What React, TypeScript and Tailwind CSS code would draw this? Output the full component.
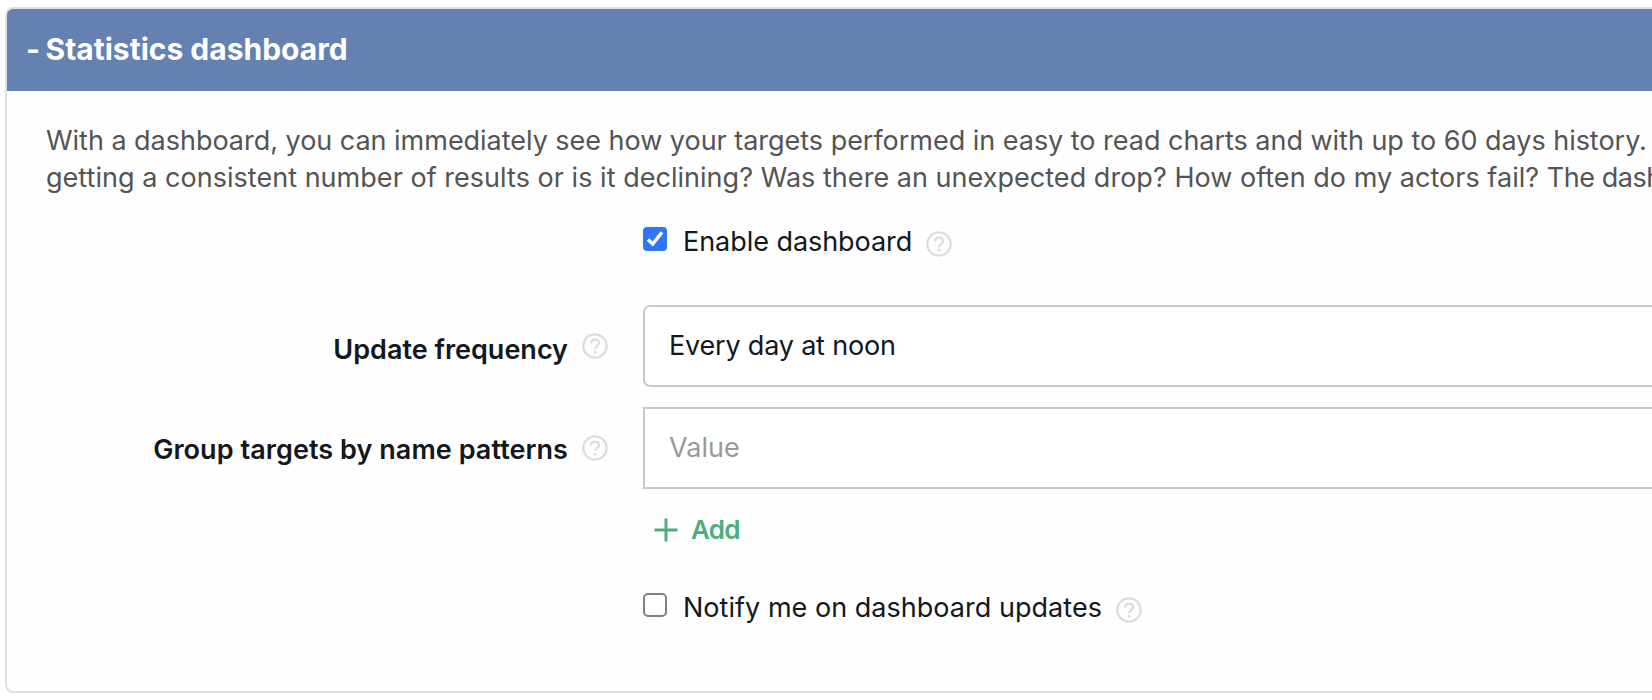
import { useState } from "react";

function HelpIcon({ className = "" }: { className?: string }) {
  return (
    <svg viewBox="0 0 26 26" fill="none" stroke="#dcdcdc" className={`size-[26px] shrink-0 ${className}`}>
      <circle cx="13" cy="13" r="11.7" strokeWidth="2.2" />
      <path d="M9.1 10.4c0-2.3 1.6-3.8 3.9-3.8s4 1.4 4 3.5c0 3-3.9 3-3.9 6" strokeWidth="2.3" />
      <circle cx="13.1" cy="19.2" r="1.5" fill="#dcdcdc" stroke="none" />
    </svg>
  );
}

function Checkbox({ checked, onChange }: { checked: boolean; onChange: () => void }) {
  return (
    <button
      type="button"
      role="checkbox"
      aria-checked={checked}
      onClick={onChange}
      className={
        checked
          ? "size-6 shrink-0 rounded-[4px] bg-[#2f76f6]"
          : "size-6 shrink-0 rounded-[5px] border-2 border-[#808080] bg-white"
      }
    >
      {checked && (
        <svg viewBox="0 0 24 24" fill="none" stroke="#fff" strokeWidth="3.4" className="size-6">
          <path d="M4.9 12.6 9.7 17 19 5.2" />
        </svg>
      )}
    </button>
  );
}

export default function App() {
  const [enabled, setEnabled] = useState(true);
  const [notify, setNotify] = useState(false);

  return (
    <div className="h-[700px] w-full overflow-hidden bg-white pl-[5px] pt-[7px] font-['Inter',sans-serif] text-[27px] text-[#12181c]">
      <section className="h-[686px] w-[1660px] overflow-hidden rounded-[8px] border-2 border-[#e0e0e0] bg-[#fefefe]">
        <header className="flex h-[82px] items-center bg-[#6581b1] pb-[2px] pl-[19px]">
          <h2 className="text-[30px] leading-[36px] font-bold tracking-[0px] whitespace-pre text-white">
            <span className="tracking-[-0.8px]">- </span>Statistics dashboard
          </h2>
        </header>

        <div className="mt-[31px] ml-[39px] text-[#545454]">
          <p className="leading-[37px] tracking-[-0.025px] whitespace-nowrap">
            With a dashboard, you can immediately see how your targets performed in easy to read charts and with up to 60 days history.
          </p>
          <p className="leading-[37px] tracking-[0.03px] whitespace-nowrap">
            getting a consistent number of results or is it declining? Was there an unexpected drop? How often do my actors fail? <span className="tracking-[-0.45px]">The dash</span>
          </p>
        </div>

        <div className="mt-[31px] ml-[636px] flex h-[28px] items-start">
          <Checkbox checked={enabled} onChange={() => setEnabled(!enabled)} />
          <span className="ml-[16px] w-[227px] leading-[30px] tracking-[-0.05px] whitespace-nowrap">Enable dashboard</span>
          <HelpIcon className="mt-[4px] ml-[16px]" />
        </div>

        <div className="mt-[50px] flex h-[82px]">
          <div className="flex w-[636px] items-start justify-end pr-[35px]">
            <span className="mt-[30px] leading-[30px] font-semibold whitespace-nowrap">Update frequency</span>
            <HelpIcon className="mt-[28px] ml-[14px]" />
          </div>
          <div className="flex h-[82px] grow items-center rounded-[7px] border-2 border-[#c9c9c9] bg-white pl-[24px]">
            <span className="leading-[30px] tracking-[-0.19px]">Every day at noon</span>
          </div>
        </div>

        <div className="mt-[20px] flex h-[82px]">
          <div className="flex w-[636px] items-start justify-end pr-[35px]">
            <span className="mt-[28px] leading-[30px] font-semibold tracking-[0.06px] whitespace-nowrap">Group targets by name patterns</span>
            <HelpIcon className="mt-[28px] ml-[14px]" />
          </div>
          <div className="flex h-[82px] grow items-center border-2 border-[#c9c9c9] bg-white pl-[24px]">
            <span className="leading-[30px] text-[#999999]">Value</span>
          </div>
        </div>

        <button type="button" className="mt-[26px] ml-[647px] flex h-[30px] items-center text-[#4bae7c]">
          <svg viewBox="0 0 24 24" fill="none" stroke="currentColor" strokeWidth="3" className="size-6">
            <path d="M12 .5v23M.5 12h23" />
          </svg>
          <span className="ml-[13px] text-[26px] leading-[30px] font-semibold tracking-[-0.8px]">Add</span>
        </button>

        <div className="mt-[48px] ml-[636px] flex h-[28px] items-start">
          <Checkbox checked={notify} onChange={() => setNotify(!notify)} />
          <span className="ml-[16px] w-[417px] leading-[30px] tracking-[0.03px] whitespace-nowrap">Notify me on dashboard updates</span>
          <HelpIcon className="mt-[4px] ml-[16px]" />
        </div>
      </section>
    </div>
  );
}
